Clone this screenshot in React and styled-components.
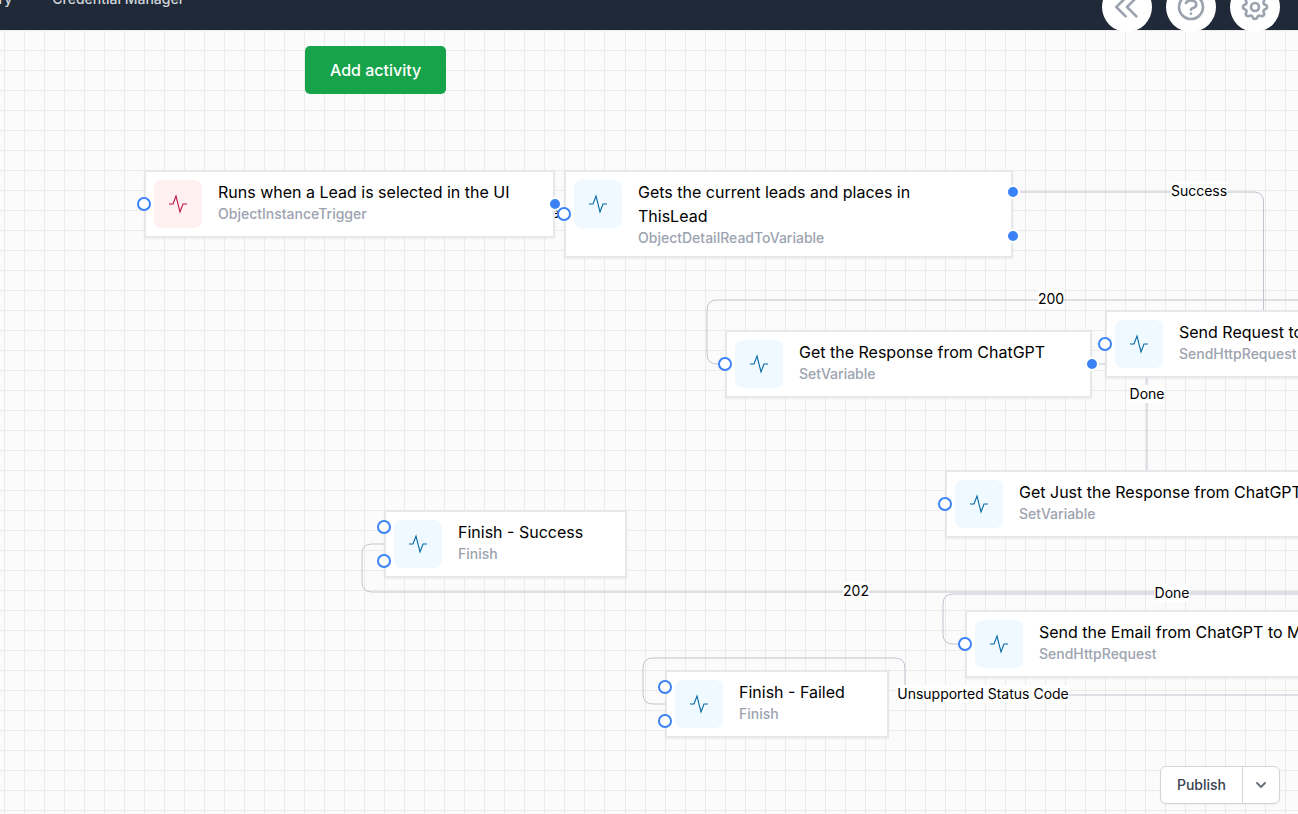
import React from "react";
import styled, { createGlobalStyle } from "styled-components";

const GlobalStyle = createGlobalStyle`
  *, *::before, *::after { box-sizing: border-box; }
  body {
    margin: 0;
    font-family: Inter, "Liberation Sans", sans-serif;
    font-size: 16px;
    line-height: 24px;
    color: #000;
    background: #fbfbfb;
  }
  button { font-family: inherit; margin: 0; cursor: pointer; }
`;

const Page = styled.div`
  min-height: 100vh;
  display: flex;
  flex-direction: column;
  overflow: hidden;
`;

const Header = styled.header`
  position: relative;
  z-index: 2;
  flex: none;
  height: 62px;
  margin-top: -32px;
  padding-right: 18px;
  display: flex;
  justify-content: space-between;
  align-items: center;
  background: #1f2937;
`;

const Nav = styled.nav`
  display: flex;
  gap: 16px;
  margin-left: -48px;
`;

const NavLink = styled.a`
  padding: 8px 12px;
  font-size: 14px;
  line-height: 20px;
  font-weight: 500;
  color: #d1d5db;
  text-decoration: none;
`;

const HeaderActions = styled.div`
  align-self: flex-end;
  display: flex;
  gap: 14px;
  margin-bottom: -2px;
`;

const RoundButton = styled.button`
  display: flex;
  align-items: center;
  justify-content: center;
  width: 50px;
  height: 50px;
  padding: 0;
  border: 0;
  border-radius: 50%;
  background: #fff;
  color: #9ca3af;
`;

const Canvas = styled.main`
  position: relative;
  flex: 1;
  min-height: 784px;
  overflow: hidden;
  background:
    repeating-linear-gradient(to right, #ebebeb 0 1px, transparent 1px 20px) 4px 0 / 620px 100% no-repeat,
    repeating-linear-gradient(to right, #ebebeb 0 1px, transparent 1px 20px) 625px 0 / 100% 100% no-repeat,
    repeating-linear-gradient(to bottom, #ebebeb 0 1px, transparent 1px 20px),
    #fbfbfb;
`;

const AddButton = styled.button`
  position: absolute;
  left: 305px;
  top: 16px;
  height: 48px;
  padding: 0 25px;
  border: 0;
  border-radius: 5px;
  background: #16a34a;
  color: #fff;
  font-size: 16px;
  line-height: 24px;
  font-weight: 500;
`;

const Edges = styled.svg`
  position: absolute;
  left: 0;
  top: 0;
  overflow: visible;
  fill: none;
  stroke: #bfc4ce;
  stroke-width: 1px;
  pointer-events: none;
`;

const EdgeLabel = styled.span`
  position: absolute;
  left: ${(p) => p.$x}px;
  top: ${(p) => p.$y}px;
  transform: translate(-50%, -50%);
  font-size: 14px;
  line-height: 18px;
  white-space: nowrap;
  background: #fff;
`;

const NodeCard = styled.article`
  position: absolute;
  left: ${(p) => p.$x}px;
  top: ${(p) => p.$y}px;
  width: ${(p) => (p.$width ? `${p.$width}px` : "max-content")};
  max-width: 449px;
  display: flex;
  align-items: flex-start;
  gap: 16px;
  padding: 8px 40px 8px 8px;
  border: 2px solid #e5e7eb;
  background: #fff;
  box-shadow: 0 1px 2px rgba(0, 0, 0, 0.05);
`;

const NodeIcon = styled.div`
  flex: none;
  display: flex;
  align-items: center;
  justify-content: center;
  width: 48px;
  height: 48px;
  border-radius: 8px;
  background: ${(p) => (p.$trigger ? "#fff1f2" : "#f0f9ff")};
  color: ${(p) => (p.$trigger ? "#be123c" : "#0369a1")};
`;

const NodeTitle = styled.h3`
  margin: 0;
  font-size: 16px;
  line-height: 24px;
  font-weight: 400;
`;

const NodeType = styled.p`
  margin: 0;
  font-size: 14px;
  line-height: 20px;
  font-weight: 500;
  color: #9ca3af;
`;

const Ports = styled.div`
  position: absolute;
  top: -2px;
  bottom: -2px;
  ${(p) => p.$side}: -9px;
  display: flex;
  flex-direction: column;
  justify-content: space-around;
`;

const Port = styled.span`
  width: 14px;
  height: 14px;
  border-radius: 50%;
  border: 2px solid ${(p) => (p.$source ? "#fff" : "#3b82f6")};
  background: ${(p) => (p.$source ? "#3b82f6" : "#fff")};
`;

const PublishGroup = styled.div`
  position: absolute;
  right: 18px;
  bottom: 10px;
  display: flex;
  border: 1px solid #d1d5db;
  border-radius: 6px;
  background: #fff;
  box-shadow: 0 1px 2px rgba(0, 0, 0, 0.05);
`;

const PublishButton = styled.button`
  padding: 8px 16px;
  border: 0;
  background: none;
  font-size: 14px;
  line-height: 20px;
  font-weight: 500;
  color: #374151;
`;

const PublishMenuButton = styled.button`
  display: flex;
  align-items: center;
  padding: 8px;
  border: 0;
  border-left: 1px solid #d1d5db;
  background: none;
  color: #6b7280;
`;

function OutlineIcon({ paths }) {
  return (
    <svg width="32" height="32" viewBox="0 0 24 24" fill="none" stroke="currentColor" strokeWidth="2" strokeLinecap="round" strokeLinejoin="round" aria-hidden="true">
      {paths.map((d) => <path key={d} d={d} />)}
    </svg>
  );
}

const headerActions = [
  { label: "Collapse", paths: ["M11 19l-7-7 7-7m8 14l-7-7 7-7"] },
  {
    label: "Help",
    paths: ["M8.228 9c.549-1.165 2.03-2 3.772-2 2.21 0 4 1.343 4 3 0 1.4-1.278 2.575-3.006 2.907-.542.104-.994.54-.994 1.093m0 3h.01M21 12a9 9 0 11-18 0 9 9 0 0118 0z"],
  },
  {
    label: "Settings",
    paths: [
      "M10.325 4.317c.426-1.756 2.924-1.756 3.35 0a1.724 1.724 0 002.573 1.066c1.543-.94 3.31.826 2.37 2.37a1.724 1.724 0 001.065 2.572c1.756.426 1.756 2.924 0 3.35a1.724 1.724 0 00-1.066 2.573c.94 1.543-.826 3.31-2.37 2.37a1.724 1.724 0 00-2.572 1.065c-.426 1.756-2.924 1.756-3.35 0a1.724 1.724 0 00-2.573-1.066c-1.543.94-3.31-.826-2.37-2.37a1.724 1.724 0 00-1.065-2.572c-1.756-.426-1.756-2.924 0-3.35a1.724 1.724 0 001.066-2.573c-.94-1.543.826-3.31 2.37-2.37.996.608 2.296.07 2.572-1.065z",
      "M15 12a3 3 0 11-6 0 3 3 0 016 0z",
    ],
  },
];

const nodes = [
  { x: 144, y: 140, width: 411, title: "Runs when a Lead is selected in the UI", type: "ObjectInstanceTrigger", trigger: true, inputs: 1, outputs: 1 },
  { x: 564, y: 140, width: 449, title: "Gets the current leads and places in ThisLead", type: "ObjectDetailReadToVariable", inputs: 1, outputs: 2 },
  { x: 725, y: 300, width: 367, title: "Get the Response from ChatGPT", type: "SetVariable", inputs: 1, outputs: 1 },
  { x: 1105, y: 280, title: "Send Request to ChatGPT", type: "SendHttpRequest", inputs: 1, outputs: 0 },
  { x: 945, y: 440, title: "Get Just the Response from ChatGPT", type: "SetVariable", inputs: 1, outputs: 1 },
  { x: 384, y: 480, width: 243, title: "Finish - Success", type: "Finish", inputs: 2, outputs: 0 },
  { x: 965, y: 580, title: "Send the Email from ChatGPT to Me", type: "SendHttpRequest", inputs: 1, outputs: 0 },
  { x: 665, y: 640, width: 224, title: "Finish - Failed", type: "Finish", inputs: 2, outputs: 0 },
];

const edges = [
  "M555 174 V184 H564",
  "M1020 162 H1254 Q1263.5 162 1263.5 172 V290",
  "M1500 270 H717 Q707 270 707 280 V324 Q707 334 717 334 H725",
  "M1099 334 H1137 Q1147 334 1147 344 V440",
  "M1500 562 H372 Q362 562 362 552 V524 Q362 514 372 514 H384",
  "M1500 564 H953 Q943 564 943 574 V604 Q943 614 953 614 H965",
  "M1500 665 H915 Q905 665 905 655 V638 Q905 628 895 628 H653 Q643 628 643 638 V664 Q643 674 653 674 H665",
];

const labels = [
  { x: 542, y: 183, text: "Done" },
  { x: 1199, y: 161, text: "Success" },
  { x: 1051, y: 269, text: "200" },
  { x: 1147, y: 364, text: "Done" },
  { x: 856, y: 561, text: "202" },
  { x: 1172, y: 563, text: "Done" },
  { x: 983, y: 664, text: "Unsupported Status Code" },
];

function ActivityNode({ node }) {
  return (
    <NodeCard $x={node.x} $y={node.y} $width={node.width}>
      <NodeIcon $trigger={node.trigger}>
        <svg width="24" height="24" viewBox="0 0 24 24" fill="none" stroke="currentColor" strokeWidth="1.1" aria-hidden="true">
          <path d="M3 12h4l3 -8l4 16l3 -8h4" />
        </svg>
      </NodeIcon>
      <div>
        <NodeTitle>{node.title}</NodeTitle>
        <NodeType>{node.type}</NodeType>
      </div>
      <Ports $side="left">
        {Array.from({ length: node.inputs }, (_, i) => <Port key={i} />)}
      </Ports>
      <Ports $side="right">
        {Array.from({ length: node.outputs }, (_, i) => <Port key={i} $source />)}
      </Ports>
    </NodeCard>
  );
}

export default function App() {
  return (
    <>
      <GlobalStyle />
      <Page>
        <Header>
          <Nav>
            <NavLink href="#history">History</NavLink>
            <NavLink href="#credentials">Credential Manager</NavLink>
          </Nav>
          <HeaderActions>
            {headerActions.map((a) => (
              <RoundButton key={a.label} type="button" aria-label={a.label}>
                <OutlineIcon paths={a.paths} />
              </RoundButton>
            ))}
          </HeaderActions>
        </Header>
        <Canvas>
          <Edges width="100%" height="100%" aria-hidden="true">
            {edges.map((d) => <path key={d} d={d} />)}
          </Edges>
          {labels.map((l) => (
            <EdgeLabel key={`${l.x}-${l.y}`} $x={l.x} $y={l.y}>{l.text}</EdgeLabel>
          ))}
          {nodes.map((n) => <ActivityNode key={n.title} node={n} />)}
          <AddButton type="button">Add activity</AddButton>
          <PublishGroup>
            <PublishButton type="button">Publish</PublishButton>
            <PublishMenuButton type="button" aria-label="More publish options">
              <svg width="20" height="20" viewBox="0 0 20 20" fill="currentColor" aria-hidden="true">
                <path fillRule="evenodd" clipRule="evenodd" d="M5.293 7.293a1 1 0 011.414 0L10 10.586l3.293-3.293a1 1 0 111.414 1.414l-4 4a1 1 0 01-1.414 0l-4-4a1 1 0 010-1.414z" />
              </svg>
            </PublishMenuButton>
          </PublishGroup>
        </Canvas>
      </Page>
    </>
  );
}
